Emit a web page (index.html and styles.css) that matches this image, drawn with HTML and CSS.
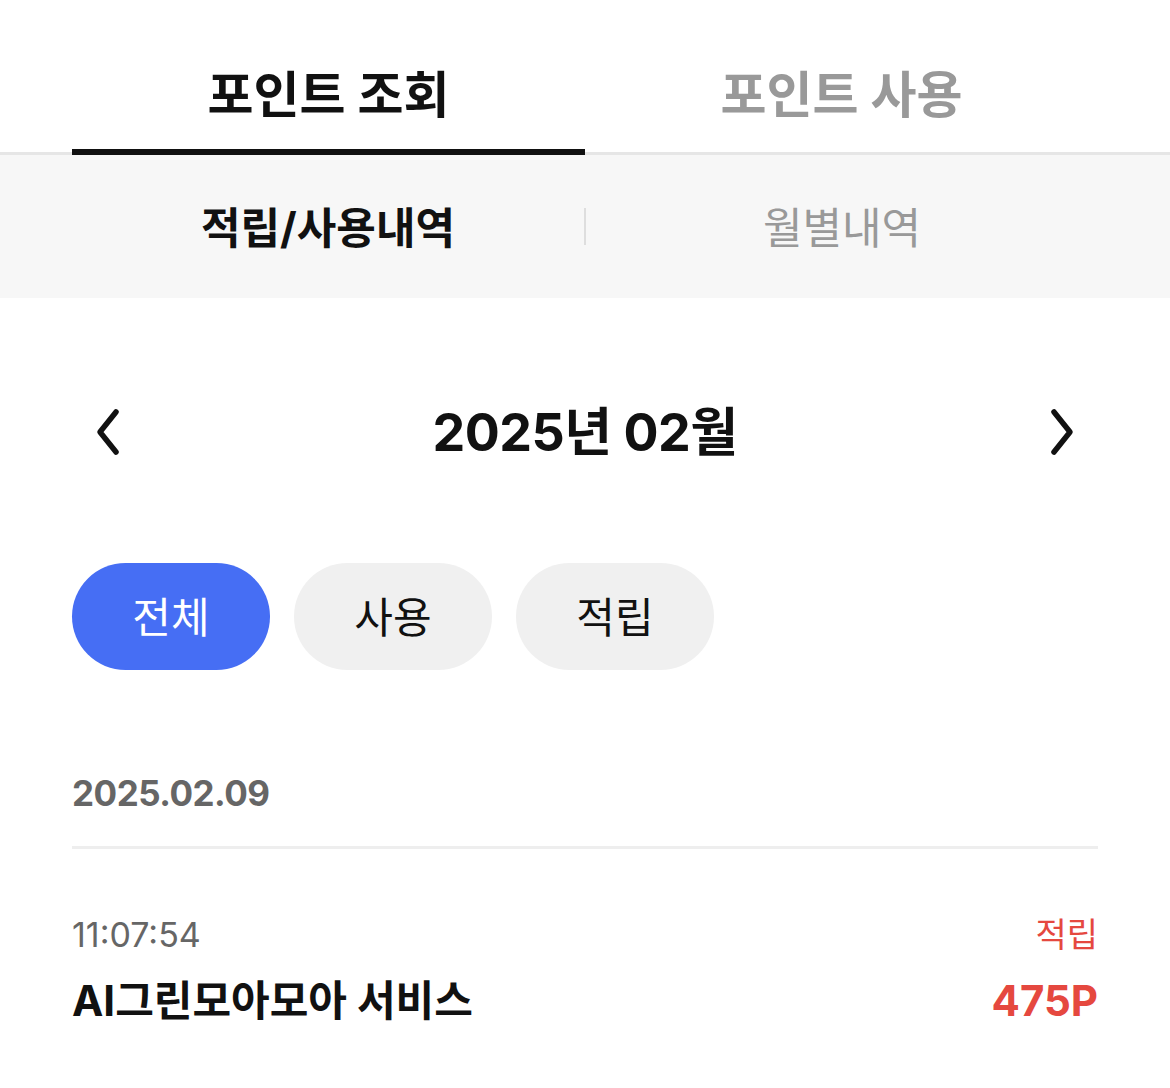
FILE: index.html
```html
<!DOCTYPE html>
<html lang="ko">
<head>
  <meta charset="UTF-8">
  <title>포인트 조회</title>
  <link rel="stylesheet" href="styles.css">
</head>
<body>

  <div class="tabs">
    <div class="tab active">포인트 조회</div>
    <div class="tab">포인트 사용</div>
  </div>

  <div class="subtabs">
    <div class="subtab active">적립/사용내역</div>
    <div class="subtab-divider"></div>
    <div class="subtab">월별내역</div>
  </div>

  <div class="content">
    <div class="month-nav">
      <div class="nav-btn">
        <svg width="30" height="48" viewBox="0 0 30 48"><path d="M24 4 L8 24 L24 44" fill="none" stroke="#111" stroke-width="5.5" stroke-linecap="round" stroke-linejoin="round"/></svg>
      </div>
      <div class="month-title">2025년 02월</div>
      <div class="nav-btn">
        <svg width="30" height="48" viewBox="0 0 30 48"><path d="M6 4 L22 24 L6 44" fill="none" stroke="#111" stroke-width="5.5" stroke-linecap="round" stroke-linejoin="round"/></svg>
      </div>
    </div>

    <div class="chips">
      <div class="chip selected">전체</div>
      <div class="chip">사용</div>
      <div class="chip">적립</div>
    </div>

    <div class="day-group">
      <div class="day-date">2025.02.09</div>
      <div class="day-line"></div>

      <div class="entry">
        <div class="entry-row">
          <div class="entry-time">11:07:54</div>
          <div class="entry-type">적립</div>
        </div>
        <div class="entry-row">
          <div class="entry-name">AI그린모아모아 서비스</div>
          <div class="entry-point">475P</div>
        </div>
      </div>
    </div>
  </div>

</body>
</html>
```

FILE: styles.css
```css
* {
  box-sizing: border-box;
}

body {
  font-family: Inter, "Noto Sans CJK KR", "Noto Sans", sans-serif;
  margin: 0;
  padding: 0;
  background: #fff;
  color: #111;
}

.tabs {
  display: flex;
  height: 155px;
  padding: 0 72px;
  border-bottom: 3px solid #e6e6e6;
}

.tab {
  flex: 1;
  text-align: center;
  font-size: 50px;
  font-weight: 700;
  line-height: 60px;
  padding-top: 65px;
  color: #999;
}

.tab.active {
  color: #111;
  border-bottom: 6px solid #111;
  margin-bottom: -3px;
}

.subtabs {
  display: flex;
  align-items: center;
  height: 143px;
  padding: 0 72px;
  background: #f7f7f7;
}

.subtab {
  flex: 1;
  text-align: center;
  font-size: 43px;
  line-height: 50px;
  padding-top: 2px;
  color: #999;
}

.subtab.active {
  color: #111;
  font-weight: 700;
}

.subtab-divider {
  width: 2px;
  height: 37px;
  background: #dedede;
}

.content {
  padding: 84px 72px 0;
}

.month-nav {
  display: flex;
  align-items: center;
  justify-content: space-between;
  height: 100px;
}

.nav-btn {
  width: 70px;
  display: flex;
  justify-content: center;
}

.month-title {
  font-size: 52px;
  font-weight: 700;
  padding-bottom: 8px;
  letter-spacing: -0.5px;
}

.chips {
  display: flex;
  gap: 24px;
  margin-top: 81px;
}

.chip {
  width: 198px;
  height: 107px;
  border-radius: 54px;
  background: #f0f0f0;
  display: flex;
  align-items: center;
  justify-content: center;
  font-size: 42px;
  padding-bottom: 4px;
  color: #111;
}

.chip.selected {
  background: #466ef4;
  color: #fff;
}

.day-group {
  margin-top: 103px;
}

.day-date {
  font-size: 35px;
  font-weight: 700;
  line-height: 40px;
  color: #666;
  letter-spacing: -0.5px;
}

.day-line {
  height: 3px;
  background: #eeeeee;
  margin-top: 33px;
}

.entry {
  margin-top: 66px;
}

.entry-row {
  display: flex;
  justify-content: space-between;
  align-items: center;
}

.entry-row + .entry-row {
  margin-top: 22px;
}

.entry-time {
  font-size: 34px;
  line-height: 40px;
  color: #666;
}

.entry-type {
  font-size: 34px;
  line-height: 40px;
  color: #e5483f;
}

.entry-name {
  font-size: 42px;
  line-height: 48px;
  font-weight: 700;
}

.entry-point {
  font-size: 42px;
  line-height: 48px;
  font-weight: 700;
  color: #e5483f;
}
```
